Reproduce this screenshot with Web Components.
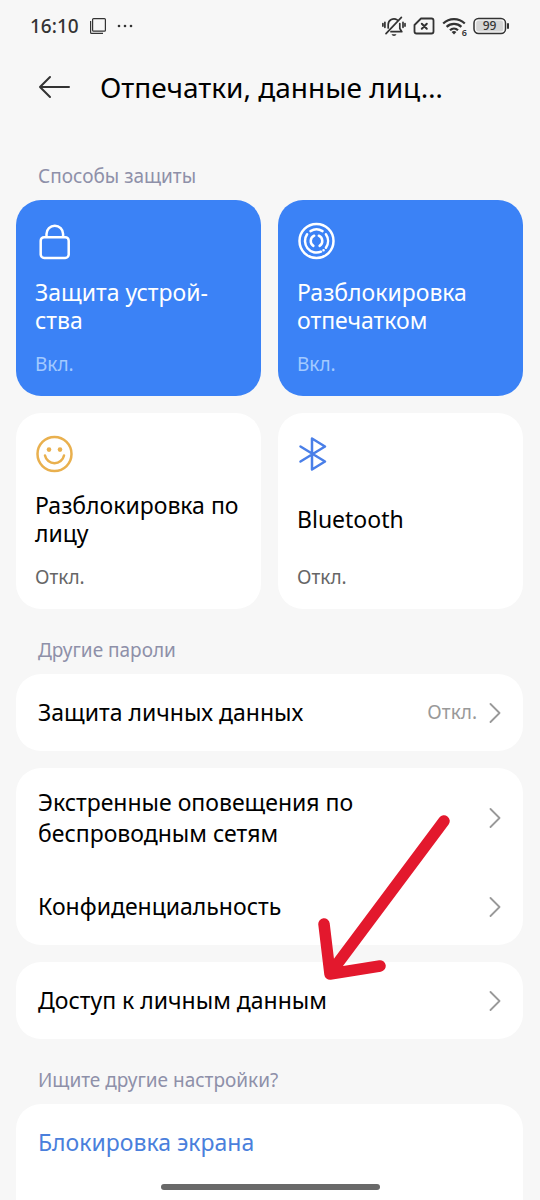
<!DOCTYPE html>
<html lang="ru">
<head>
<meta charset="utf-8">
<meta name="viewport" content="width=device-width, initial-scale=1">
<title>Отпечатки, данные лица</title>
<style>
  html, body { margin: 0; }
  body { background: #f7f7f7; color: #000; font-family: "Noto Sans", "Open Sans", sans-serif; }
</style>
</head>
<body>
<security-page></security-page>

<script>
const define = (name, html, setup) => {
  const template = document.createElement('template');
  template.innerHTML = html;
  customElements.define(name, class extends HTMLElement {
    constructor() {
      super();
      this.attachShadow({ mode: 'open' }).append(template.content.cloneNode(true));
    }
    connectedCallback() { if (setup) setup(this, this.shadowRoot); }
  });
};

define('status-bar', `
  <style>
    :host { display: flex; align-items: center; justify-content: space-between; height: 52px; padding: 0 30px; color: #333; }
    div { display: flex; align-items: center; }
    .left { gap: 10px; }
    .right { gap: 7px; }
    time { font-size: 19px; line-height: 24px; font-weight: 500; }
    svg { display: block; fill: none; stroke: #333; }
    .wifi { position: relative; }
    .wifi span { position: absolute; right: -1px; bottom: -2px; font-size: 9px; line-height: 9px; font-weight: 600; }
    .battery { position: relative; }
    .battery span { position: absolute; left: 0; top: 0; width: 33px; text-align: center; font-size: 12px; line-height: 18px; font-weight: 500; }
  </style>
  <div class="left">
    <time>16:10</time>
    <svg width="18" height="18" viewBox="0 0 18 18" stroke-width="1.2"><rect x="3.6" y="1.6" width="12.8" height="12.6" rx="1"/><path d="M1.6 4v11.4q0 1 1 1H14"/></svg>
    <svg width="16" height="4" viewBox="0 0 16 4"><g fill="#333" stroke="none"><circle cx="2" cy="2" r="1.3"/><circle cx="8" cy="2" r="1.3"/><circle cx="14" cy="2" r="1.3"/></g></svg>
  </div>
  <div class="right">
    <svg width="24" height="22" viewBox="0 0 24 22" stroke-width="1.7" stroke-linecap="round" stroke-linejoin="round"><path d="M6.2 13V9.500a5.700 5.700 0 0 1 9-4.600M17.800 8.500v5l2 3.200H9M4 18.600 19.400 2.300M2.900 7.300v5M.9 8.600v2.500M21 7.300v5M23 8.600v2.500"/><path d="M9.500 19.300h5q-.6 1.800-2.500 1.800t-2.500-1.800z" fill="#333" stroke="none"/></svg>
    <svg width="22" height="18" viewBox="0 0 22 18" stroke-width="1.8" stroke-linejoin="round" stroke-linecap="round"><path d="M8 1.500h10.500q2 0 2 2v11q0 2-2 2H3.500q-2 0-2-2V8z"/><path d="m8.800 6.700 5 5m0-5-5 5" stroke-width="2"/></svg>
    <div class="wifi">
      <svg width="24" height="18" viewBox="0 0 24 18" stroke-width="2.200"><path d="M1.200 6.500a15.500 15.500 0 0 1 21.600 0M4.600 9.900a10.600 10.600 0 0 1 14.800 0M8 13.200a5.800 5.800 0 0 1 8 0"/><path d="M9.600 14.900q2.400-1.800 4.800 0L12 17.600z" fill="#333" stroke="none"/></svg>
      <span>6</span>
    </div>
    <div class="battery">
      <svg width="37" height="18" viewBox="0 0 37 18"><rect x="1" y="1.500" width="31.500" height="15" rx="4.500" stroke-width="1.500"/><rect x="3.200" y="3.600" width="27" height="10.800" rx="2.500" fill="#d6d6d6" stroke="none"/><path d="M35 7v4" stroke-width="2" stroke-linecap="round"/></svg>
      <span>99</span>
    </div>
  </div>
`);

define('page-header', `
  <style>
    :host { display: flex; align-items: center; gap: 26px; height: 70px; padding: 0 34px; }
    button { display: grid; place-items: center; width: 40px; height: 40px; padding: 0; border: 0; background: none; color: #333; }
    h1 { flex: 1; min-width: 0; margin: 0; font-size: 28px; line-height: 36px; font-weight: 400; white-space: nowrap; }
  </style>
  <button type="button" aria-label="Назад">
    <svg width="32" height="24" viewBox="0 0 32 24" fill="none" stroke="currentColor" stroke-width="2" stroke-linecap="round" stroke-linejoin="round"><path d="M12 2 2 12l10 10M2 12h29"/></svg>
  </button>
  <h1><slot></slot></h1>
`);

define('section-label', `
  <style>
    :host { display: block; padding: 0 22px; color: #8e90a9; }
    h2 { margin: 0; font-size: 19px; line-height: 24px; font-weight: 400; }
  </style>
  <h2><slot></slot></h2>
`);

define('method-card', `
  <style>
    :host { display: block; }
    button { display: flex; flex-direction: column; align-items: flex-start; width: 100%; height: 196px; padding: 22px 16px 20px 19px; border: 0; border-radius: 25px; background: #fff; color: #000; font: inherit; text-align: left; }
    :host([active]) button { background: #3b82f6; color: #fff; }
    .icon { display: block; height: 38px; }
    .title { flex: 1; display: flex; align-items: center; font-size: 23px; line-height: 28px; }
    .state { font-size: 19px; line-height: 24px; color: #666; }
    :host([active]) .state { color: #a3caff; }
  </style>
  <button type="button">
    <span class="icon"><slot name="icon"></slot></span>
    <span class="title"><span><slot></slot></span></span>
    <span class="state"></span>
  </button>
`, (el, root) => { root.querySelector('.state').textContent = el.getAttribute('state'); });

define('settings-group', `
  <style>
    :host { display: block; border-radius: 25px; background: #fff; overflow: hidden; }
    :host([open-ended]) { flex: 1; border-radius: 25px 25px 0 0; }
  </style>
  <slot></slot>
`);

define('settings-row', `
  <style>
    :host { display: block; }
    a { display: flex; align-items: center; gap: 12px; box-sizing: border-box; min-height: 77px; padding: 19px 22px; color: inherit; text-decoration: none; font-size: 23px; line-height: 31px; }
    .label { flex: 1; }
    .label span { display: block; max-width: 340px; }
    .state { font-size: 19px; color: #999; }
    .state:empty { display: none; }
    svg { display: block; }
    :host([link]) a { color: #4a7fdc; }
    :host([link]) svg { display: none; }
  </style>
  <a href="#">
    <span class="label"><span><slot></slot></span></span>
    <span class="state"></span>
    <svg width="12" height="20" viewBox="0 0 12 20" fill="none" stroke="#999" stroke-width="1.800" stroke-linecap="round" stroke-linejoin="round"><path d="m1.500 1 9 9-9 9"/></svg>
  </a>
`, (el, root) => { root.querySelector('.state').textContent = el.getAttribute('state') || ''; });

define('pointer-arrow', `
  <style>
    :host { position: absolute; right: 71px; bottom: -36px; pointer-events: none; z-index: 1; }
    svg { display: block; }
  </style>
  <svg width="136" height="168" viewBox="0 0 136 168" fill="none" stroke="#e3182d" stroke-width="11.500" stroke-linecap="round" stroke-linejoin="round" aria-hidden="true"><path d="M128 8 16 158M8 111l6 50 50-8"/></svg>
`);

define('home-indicator', `
  <style>
    :host { position: fixed; left: 0; right: 0; bottom: 10px; display: flex; justify-content: center; pointer-events: none; }
    i { width: 219px; height: 6px; border-radius: 3px; background: #696969; }
  </style>
  <i></i>
`);

define('security-page', `
  <style>
    :host { display: flex; flex-direction: column; min-height: 100vh; }
    main { flex: 1; display: flex; flex-direction: column; padding: 42px 17px 0 16px; }
    .methods { display: grid; grid-template-columns: 1fr 1fr; gap: 17px; margin: 12px 0 29px; }
    .groups { display: flex; flex-direction: column; gap: 17px; margin: 12px 0 29px; }
    .access { position: relative; }
    settings-group[open-ended] { margin-top: 12px; }
    svg { display: block; fill: none; }
  </style>
  <status-bar></status-bar>
  <page-header>Отпечатки, данные лиц…</page-header>
  <main>
    <section-label>Способы защиты</section-label>
    <div class="methods">
      <method-card active state="Вкл.">
        <svg slot="icon" width="38" height="38" viewBox="0 0 38 38" stroke="#fff" stroke-width="2.500"><rect x="5.700" y="15.200" width="28" height="20.800" rx="3.500"/><path d="M11.500 15V12a8.300 8.300 0 0 1 16.600 0v3"/></svg>
        Защита устрой-ства
      </method-card>
      <method-card active state="Вкл.">
        <svg slot="icon" width="38" height="38" viewBox="0 0 38 38" stroke="#fff" stroke-width="2.500" stroke-linecap="round"><circle cx="19.500" cy="19" r="17"/><path d="M13.500 9.100a11.600 11.600 0 0 1 12 0M28.900 12.300a11.600 11.600 0 0 1 0 13.400M24 29.700A11.600 11.600 0 0 1 10.100 12.300M26.500 28.200h.1M17.200 13.700a5.800 5.800 0 0 0-.8 10.200M21.800 13.700a5.800 5.800 0 0 1 .8 10.200"/></svg>
        Разблокировка отпечатком
      </method-card>
      <method-card state="Откл.">
        <svg slot="icon" width="38" height="38" viewBox="0 0 38 38" stroke="#e9b04e" stroke-width="2.500" stroke-linecap="round"><circle cx="19.500" cy="19" r="17"/><path d="M10 20.500a9.700 9.700 0 0 0 19 0"/><g fill="#e9b04e" stroke="none"><circle cx="14" cy="14.600" r="2.300"/><circle cx="25" cy="14.600" r="2.300"/></g></svg>
        Разблокировка по лицу
      </method-card>
      <method-card state="Откл.">
        <svg slot="icon" width="38" height="38" viewBox="0 0 38 38" stroke="#4a7fe8" stroke-width="2.500" stroke-linecap="round" stroke-linejoin="round"><path d="m3.500 11.500 24.500 15-13 8V3.500l13 8-24.500 15"/></svg>
        Bluetooth
      </method-card>
    </div>

    <section-label>Другие пароли</section-label>
    <div class="groups">
      <settings-group>
        <settings-row state="Откл.">Защита личных данных</settings-row>
      </settings-group>
      <div class="access">
        <settings-group>
          <settings-row>Экстренные оповещения по беспроводным сетям</settings-row>
          <settings-row>Конфиденциальность</settings-row>
        </settings-group>
        <pointer-arrow></pointer-arrow>
      </div>
      <settings-group>
        <settings-row>Доступ к личным данным</settings-row>
      </settings-group>
    </div>

    <section-label>Ищите другие настройки?</section-label>
    <settings-group open-ended>
      <settings-row link>Блокировка экрана</settings-row>
    </settings-group>
  </main>
  <home-indicator></home-indicator>
`);
</script>
</body>
</html>
